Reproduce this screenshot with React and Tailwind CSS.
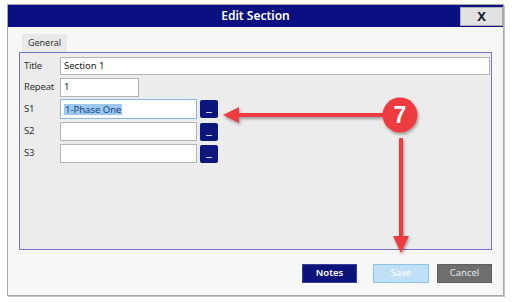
const font = { fontFamily: '"Noto Sans", "Open Sans", sans-serif' };

const Field = ({ label, width, value, selected, focus, picker, mt, h }) => (
  <div className={`flex items-center ${mt}`}>
    <span className="w-[40px] pl-[4px] text-[9.5px] text-[#333] tracking-[-0.2px]">{label}</span>
    <div
      className={`${width} ${h} flex items-center bg-white border px-[3px] text-[9.5px] text-[#222] ${
        focus ? "border-[#86b9ea]" : "border-[#b4b4b4]"
      }`}
    >
      {selected ? (
        <span className="bg-[#9dc8ee] text-[#1b3f8a] leading-[11px] px-[1px]">{value}</span>
      ) : (
        value
      )}
    </div>
    {picker && (
      <button className="ml-[3px] w-[18px] h-[18px] rounded-[2px] bg-[#0c167c] flex items-end justify-center pb-[5px]">
        <span className="w-[6px] h-[1px] bg-white/80" />
      </button>
    )}
  </div>
);

export default function App() {
  return (
    <div className="w-[512px] h-[302px] bg-white pt-[4px] pl-[7px] relative overflow-hidden" style={font}>
      <div className="w-[497px] h-[292px] border border-[#a9a9a9] bg-[#f7f7f7] flex flex-col shadow-[1px_1px_0_#c8c8c8]">
        {/* Title bar */}
        <div className="h-[22px] bg-[#0a0f82] flex items-center relative">
          <span className="flex-1 text-center text-white text-[12px] font-semibold">Edit Section</span>
          <button className="absolute right-0 top-[2px] w-[43px] h-[19px] bg-[#e1e1e1] border border-[#adadad] flex items-center justify-center text-[13px] font-bold text-[#1a1a2a]">
            X
          </button>
        </div>

        {/* Body */}
        <div className="flex-1 flex flex-col px-[11px] pt-[7px]">
          <div className="ml-[3px] w-[45px] h-[18px] bg-[#e9e9e9] flex items-center justify-center text-[9px] text-[#333]">
            General
          </div>
          <div className="h-[198px] border border-[#7474cc] bg-[#ececec] flex flex-col pt-[4px] pr-[1px]">
            <Field label="Title" width="flex-1" h="h-[18px]" value="Section 1" />
            <Field label="Repeat" width="w-[79px]" h="h-[19px]" value="1" mt="mt-[3px]" />
            <Field label="S1" width="w-[137px]" h="h-[20px]" value="1-Phase One" selected focus picker mt="mt-[2px]" />
            <Field label="S2" width="w-[137px]" h="h-[19px]" value="" picker mt="mt-[3px]" />
            <Field label="S3" width="w-[137px]" h="h-[19px]" value="" picker mt="mt-[3px]" />
          </div>

          {/* Buttons */}
          <div className="flex justify-end gap-[8px] mt-[14px]">
            <button className="w-[55px] h-[19px] bg-[#0c147a] border border-[#3a3f9a] text-white text-[9.5px] font-semibold">
              Notes
            </button>
            <button className="ml-[8px] w-[56px] h-[19px] bg-[#bfe0f7] border border-[#8ec3ea] text-white text-[9.5px]">
              Save
            </button>
            <button className="w-[55px] h-[19px] bg-[#6e6e6e] border border-[#5e5e5e] text-[#e6e6e6] text-[9.5px]">
              Cancel
            </button>
          </div>
        </div>
      </div>

      {/* Annotation overlay */}
      <svg className="absolute left-0 top-0" width="512" height="302" viewBox="0 0 512 302">
        <defs>
          <filter id="sh" x="-50%" y="-50%" width="200%" height="200%">
            <feDropShadow dx="1" dy="2" stdDeviation="1.5" floodColor="#000" floodOpacity="0.35" />
          </filter>
        </defs>
        <g filter="url(#sh)" fill="#ee3b3f" stroke="none">
          <rect x="236" y="113" width="148" height="4" rx="1" />
          <polygon points="223,115 239,107 239,123" />
          <rect x="399" y="138" width="4" height="102" rx="1" />
          <polygon points="401,253 393,236 409,236" />
          <circle cx="400" cy="115" r="17.5" />
        </g>
        <text x="400" y="123" textAnchor="middle" fill="#fff" fontSize="23" fontWeight="700" fontFamily="Liberation Sans, Arial, sans-serif">
          7
        </text>
      </svg>
    </div>
  );
}
